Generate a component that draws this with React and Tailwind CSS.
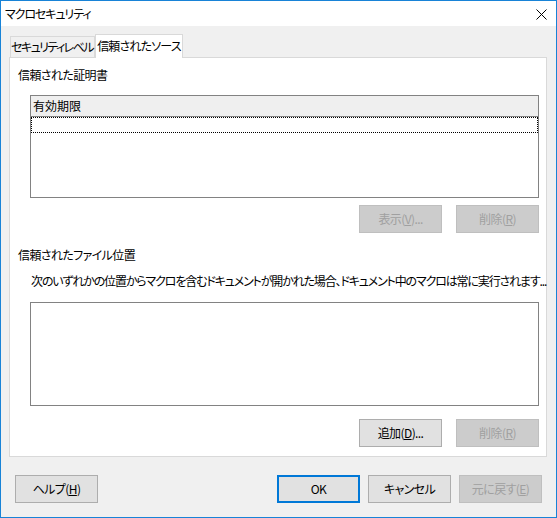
import React from "react";

const font = {
  fontFamily: '"Noto Sans CJK JP", "Noto Sans", sans-serif',
};

function Btn({ children, disabled, primary, className = "" }) {
  const base =
    "w-[83px] h-[28px] flex items-center justify-center text-[12px] leading-none whitespace-nowrap tracking-[-0.6px]";
  const look = disabled
    ? "bg-[#cccccc] border border-[#bfbfbf] text-[#a0a0a0]"
    : primary
    ? "bg-[#e1e1e1] border-2 border-[#0078d7] text-black"
    : "bg-[#e1e1e1] border border-[#adadad] text-black";
  return <div className={`${base} ${look} ${className}`}>{children}</div>;
}

export default function App() {
  return (
    <div
      style={font}
      className="w-[557px] h-[518px] border border-[#1883d7] bg-[#f0f0f0] flex flex-col [font-feature-settings:'palt'] text-black select-none"
    >
      {/* title bar */}
      <div className="h-[25px] bg-white flex items-center justify-between pl-[4px] pr-[9px]">
        <span className="text-[12px] leading-none whitespace-nowrap tracking-[-1.1px]">マクロセキュリティ</span>
        <svg width="11" height="11" viewBox="0 0 11 11" className="mt-[1px]">
          <path d="M0.5 0.5 L10.5 10.5 M10.5 0.5 L0.5 10.5" stroke="#000" strokeWidth="1" />
        </svg>
      </div>

      {/* tabs + panel */}
      <div className="pl-[8px] pr-[9px] mt-[8px] flex flex-col">
        <div className="flex items-end h-[23px] pl-[1px]">
          <div className="w-[85px] h-[21px] border border-b-0 border-[#d9d9d9] bg-[#f0f0f0] flex items-center justify-center text-[12px] leading-none whitespace-nowrap tracking-[-1.6px] pr-[1px]">
            セキュリティレベル
          </div>
          <div className="w-[88px] h-[24px] -mb-[1px] relative z-10 border border-b-0 border-[#d9d9d9] bg-white flex items-center justify-center text-[12px] leading-none pb-[2px] whitespace-nowrap tracking-[-0.8px]">
            信頼されたソース
          </div>
        </div>
        <div className="w-[538px] h-[400px] border border-[#d9d9d9] bg-white flex flex-col pt-[9px] pl-[8px] pr-[7px] pb-[9px]">
          <div className="h-[16px] text-[12px] leading-[16px] tracking-[-0.6px]">信頼された証明書</div>

          <div className="ml-[12px] mt-[12px] h-[103px] border border-[#828282] flex flex-col">
            <div className="h-[21px] bg-[#efefef] border-b border-[#828282] flex items-center pl-[2px] text-[12px] leading-none">
              有効期限
            </div>
            <div className="h-[16px] border border-dotted border-black" />
          </div>

          <div className="mt-[7px] flex justify-end gap-[14px]">
            <Btn disabled>
              表示(<span className="underline">V</span>)...
            </Btn>
            <Btn disabled>
              削除(<span className="underline">R</span>)
            </Btn>
          </div>

          <div className="mt-[14px] h-[16px] text-[12px] leading-[16px] tracking-[-0.6px]">信頼されたファイル位置</div>
          <div className="mt-[10px] ml-[13px] h-[16px] text-[12px] leading-[16px] whitespace-nowrap tracking-[-1.15px]">
            次のいずれかの位置からマクロを含むドキュメントが開かれた場合、ドキュメント中のマクロは常に実行されます...
          </div>

          <div className="ml-[12px] mt-[13px] h-[104px] border border-[#828282]" />

          <div className="mt-[13px] flex justify-end gap-[14px]">
            <Btn>
              追加(<span className="underline">D</span>)...
            </Btn>
            <Btn disabled>
              削除(<span className="underline">R</span>)
            </Btn>
          </div>
        </div>
      </div>

      {/* dialog buttons */}
      <div className="mt-[18px] flex items-center pl-[14px] pr-[14px]">
        <Btn>
          ヘルプ(<span className="underline">H</span>)
        </Btn>
        <div className="flex-1" />
        <div className="flex gap-[8px]">
          <Btn primary>OK</Btn>
          <Btn>キャンセル</Btn>
          <Btn disabled>
            元に戻す(<span className="underline">E</span>)
          </Btn>
        </div>
      </div>
    </div>
  );
}
